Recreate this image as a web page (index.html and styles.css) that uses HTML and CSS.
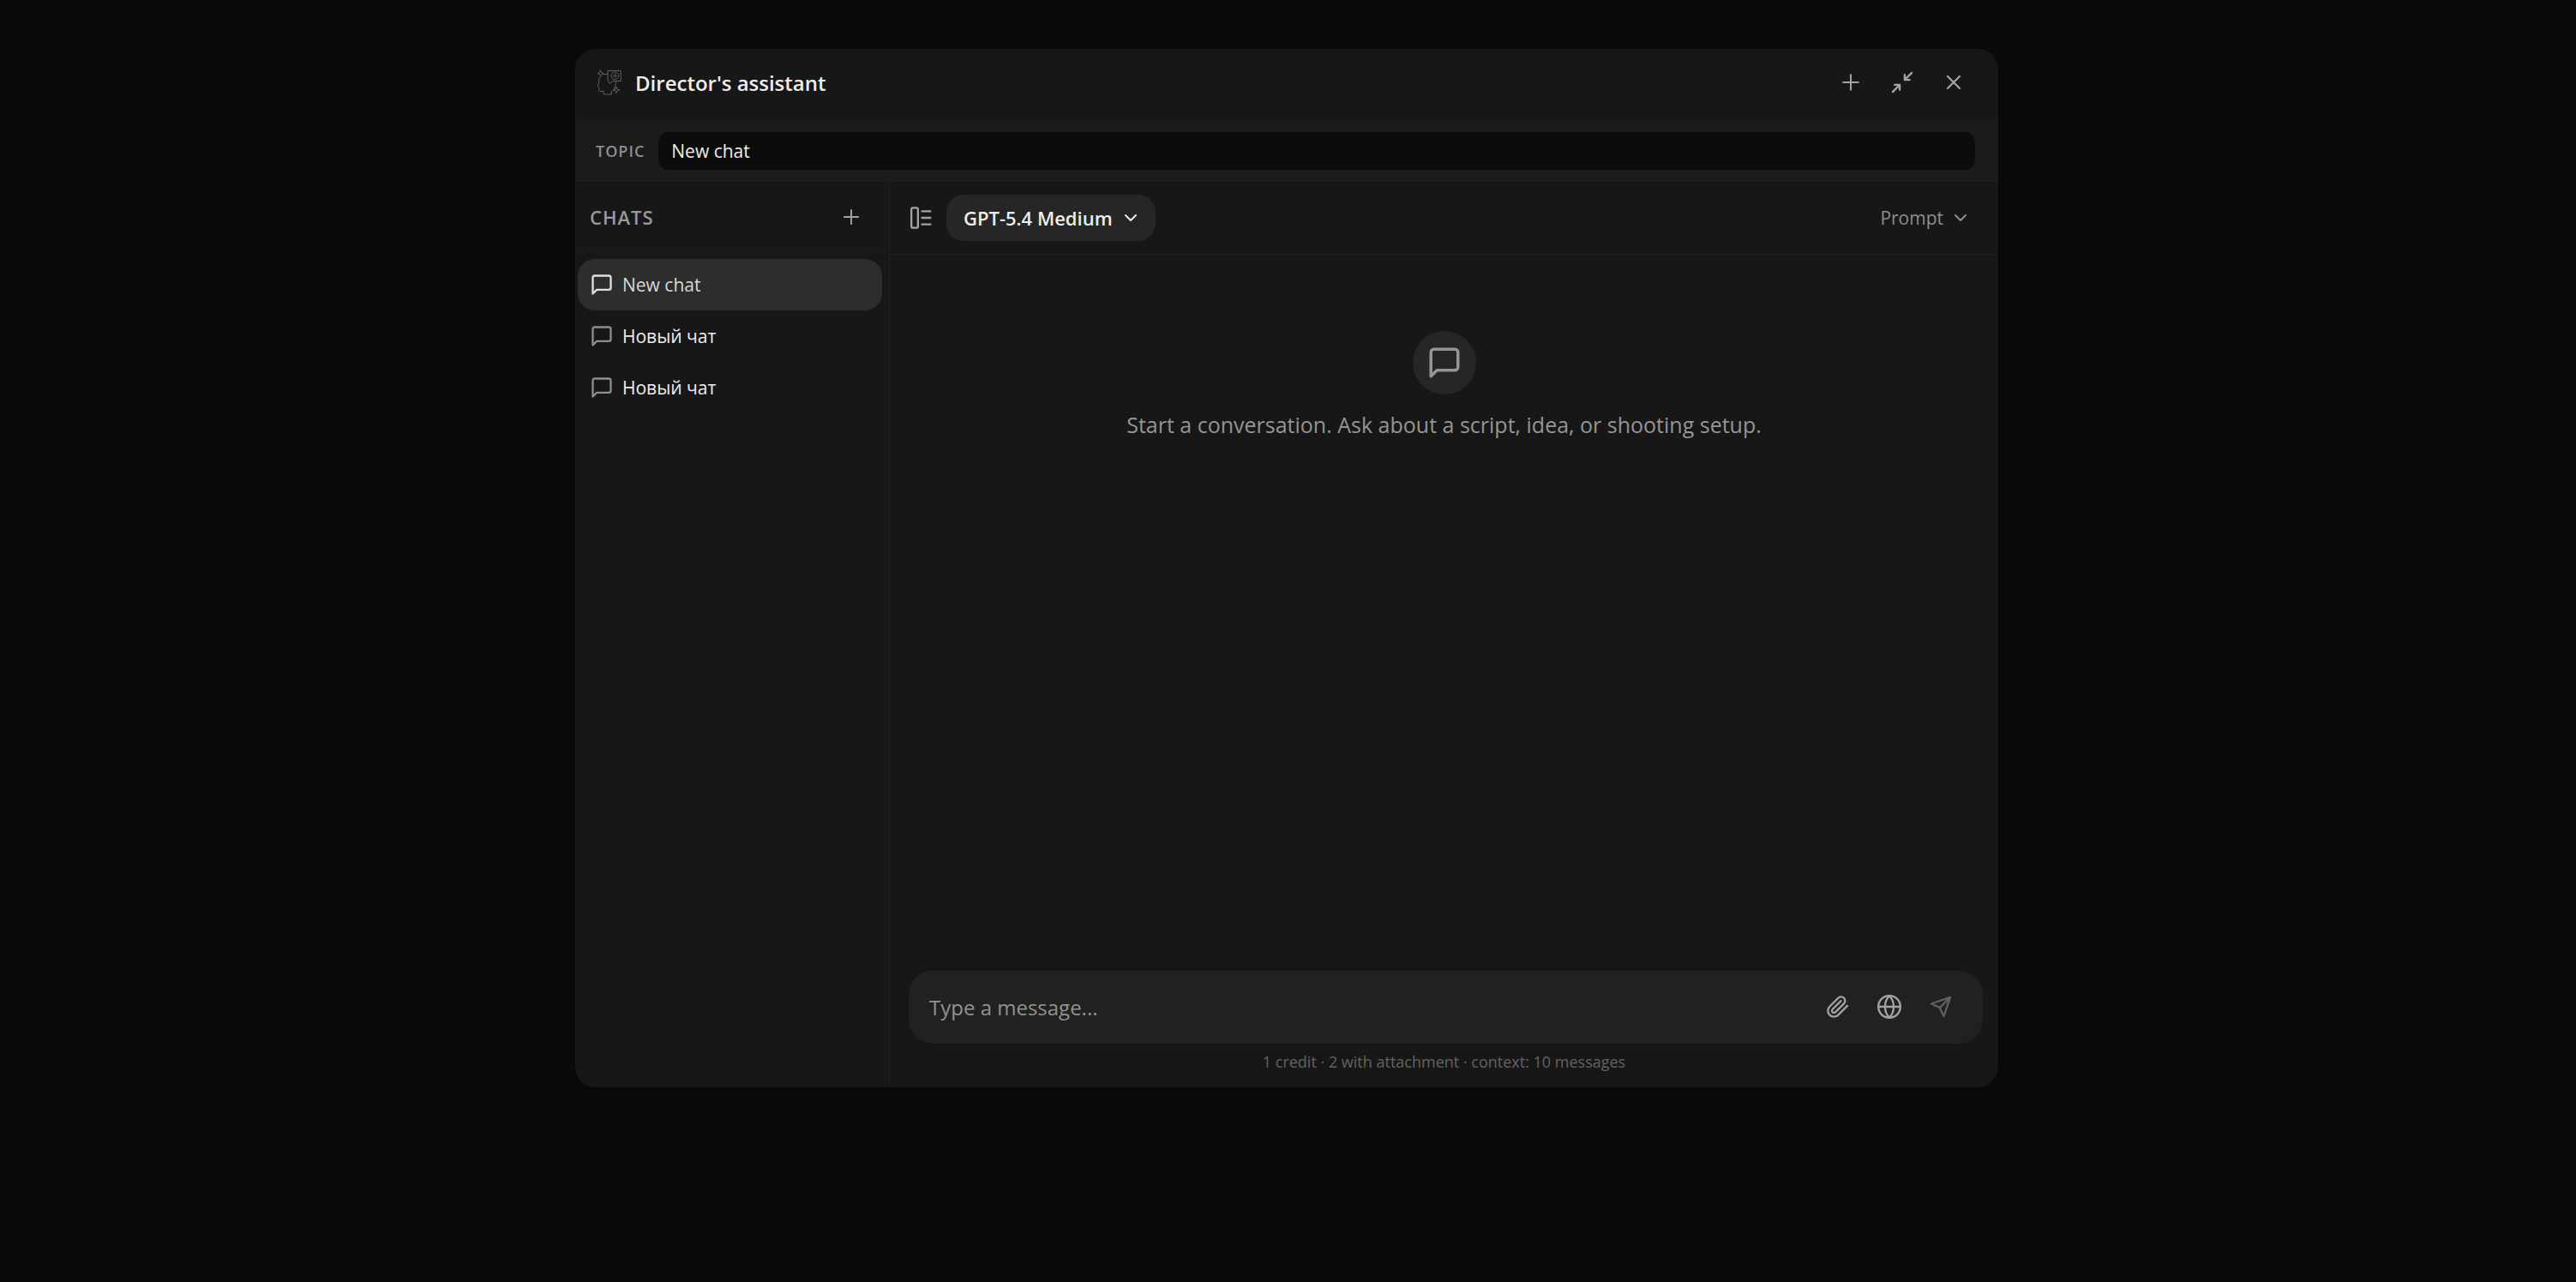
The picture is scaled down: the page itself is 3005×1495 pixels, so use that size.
FILE: index.html
```html
<!DOCTYPE html>
<html lang="en">
<head>
    <meta charset="UTF-8">
    <meta name="viewport" content="width=device-width, initial-scale=1.0">
    <title>Director's assistant</title>
    <link rel="stylesheet" href="styles.css">
</head>
<body>
    <!-- shared icon shapes -->
    <svg class="sprite" aria-hidden="true">
        <symbol id="i-plus" viewBox="0 0 24 24"><path d="M4.500 12h15M12 4.500v15"/></symbol>
        <symbol id="i-close" viewBox="0 0 24 24"><path d="M18 6 6 18M6 6l12 12"/></symbol>
        <symbol id="i-minimize" viewBox="0 0 24 24"><path d="M4.500 14.500h5v5M19.500 9.500h-5v-5M14.500 9.500 21.500 2.500M2.500 21.500l7-7"/></symbol>
        <symbol id="i-chat" viewBox="0 0 24 24"><path d="M21 15a2 2 0 0 1-2 2H7l-4 4V5a2 2 0 0 1 2-2h14a2 2 0 0 1 2 2z"/></symbol>
        <symbol id="i-down" viewBox="0 0 24 24"><path d="m6 9 6 6 6-6"/></symbol>
        <symbol id="i-panel" viewBox="0 0 24 24"><rect x="2.700" y="2" width="6.600" height="20" rx="1.500"/><path stroke-linecap="butt" d="M12.500 5.500h10M12.500 12h10M12.500 18.500h10"/></symbol>
        <symbol id="i-clip" viewBox="0 0 24 24"><path d="m21.440 11.050-9.190 9.190a6 6 0 0 1-8.490-8.490l8.570-8.570A4 4 0 1 1 18 8.840l-8.590 8.570a2 2 0 0 1-2.830-2.830l8.490-8.480"/></symbol>
        <symbol id="i-globe" viewBox="0 0 24 24"><circle cx="12" cy="12" r="11"/><path d="M1 12h22M12 1c3 3.200 4.300 7 4.300 11s-1.300 7.800-4.300 11c-3-3.200-4.300-7-4.300-11S9 4.200 12 1z"/></symbol>
        <symbol id="i-send" viewBox="0 0 24 24"><path d="M21.500 2.500 15 21.500l-4-8.500-8.500-4zM21.500 2.500 11 13"/></symbol>
        <symbol id="i-logo" viewBox="0 0 30 30">
            <path d="M8 5.500h6M5 9C3.500 11 3.500 13 3.800 15l-1.500 4c0 1 1.500 1 1.500 2v3c0 1 1 1.500 2 1.500h3.500v3.500h9v-3.500c3-2 5-5.500 5-11M14.200 1.500h15v12H20l-4 3-1.800-4z"/>
            <path d="m5.500 1 1 2.500 2.500 1-2.500 1-1 2.500-1-2.500-2.500-1 2.500-1zM24 20.500l1 2.500 2.500 1-2.500 1-1 2.500-1-2.500-2.500-1 2.500-1z"/>
            <circle cx="22.300" cy="7.300" r="4.300"/><circle cx="22.300" cy="7.300" r="1.500"/>
        </symbol>
    </svg>

    <main class="modal">
        <header class="modal-header">
            <svg class="logo"><use href="#i-logo"/></svg>
            <h1>Director's assistant</h1>
            <div class="header-actions">
                <button class="icon-btn" aria-label="New chat"><svg class="icon thin"><use href="#i-plus"/></svg></button>
                <button class="icon-btn" aria-label="Collapse"><svg class="icon"><use href="#i-minimize"/></svg></button>
                <button class="icon-btn" aria-label="Close"><svg class="icon"><use href="#i-close"/></svg></button>
            </div>
        </header>

        <div class="topic">
            <label for="topic">TOPIC</label>
            <input id="topic" type="text" value="New chat">
        </div>

        <div class="content">
            <aside class="sidebar">
                <div class="sidebar-header">
                    <h2>CHATS</h2>
                    <button class="icon-btn" aria-label="Add chat"><svg class="icon small thin"><use href="#i-plus"/></svg></button>
                </div>
                <nav class="chat-list">
                    <button class="chat active"><svg class="icon"><use href="#i-chat"/></svg>New chat</button>
                    <button class="chat"><svg class="icon"><use href="#i-chat"/></svg>Новый чат</button>
                    <button class="chat"><svg class="icon"><use href="#i-chat"/></svg>Новый чат</button>
                </nav>
            </aside>

            <section class="main">
                <div class="toolbar">
                    <button class="panel-btn" aria-label="Toggle sidebar"><svg class="icon"><use href="#i-panel"/></svg></button>
                    <button class="model-btn">GPT-5.4 Medium<svg class="chevron"><use href="#i-down"/></svg></button>
                    <button class="prompt-btn">Prompt<svg class="chevron"><use href="#i-down"/></svg></button>
                </div>

                <div class="empty">
                    <div class="empty-icon"><svg><use href="#i-chat"/></svg></div>
                    <p>Start a conversation. Ask about a script, idea, or shooting setup.</p>
                </div>

                <form class="composer">
                    <input type="text" placeholder="Type a message..." aria-label="Message">
                    <button type="button" class="icon-btn" aria-label="Attach file"><svg class="icon"><use href="#i-clip"/></svg></button>
                    <button type="button" class="icon-btn" aria-label="Web search"><svg class="icon"><use href="#i-globe"/></svg></button>
                    <button type="submit" class="icon-btn" aria-label="Send" disabled><svg class="icon"><use href="#i-send"/></svg></button>
                </form>
                <p class="hint">1 credit · 2 with attachment · context: 10 messages</p>
            </section>
        </div>
    </main>
</body>
</html>
```

FILE: styles.css
```css
* {
    margin: 0;
    padding: 0;
    box-sizing: border-box;
}

body {
    min-height: 100vh;
    padding: 57px 27px 57px 24px;
    background-color: #090909;
    color: #ededed;
    font-family: "Open Sans", "Noto Sans", sans-serif;
    font-size: 21px;
}

button,
input {
    border: none;
    outline: none;
    background: none;
    color: inherit;
    font: inherit;
}

button {
    cursor: pointer;
}

svg {
    flex-shrink: 0;
    fill: none;
    stroke: currentColor;
    stroke-width: 2;
    stroke-linecap: round;
    stroke-linejoin: round;
}

.sprite {
    display: none;
}

.modal {
    display: flex;
    flex-direction: column;
    width: 100%;
    max-width: 1660px;
    height: 81vh;
    margin: 0 auto;
    background-color: #171717;
    border-radius: 24px;
    overflow: hidden;
}

/* Header */
.modal-header {
    display: flex;
    align-items: center;
    height: 84px;
    padding: 0 22px 6px 24px;
    border-bottom: 1px solid #1e1e1e;
}

.logo {
    width: 30px;
    height: 30px;
    margin-right: 16px;
    color: #606060;
    stroke-width: 1;
}

h1 {
    padding-top: 2px;
    font-size: 24px;
    font-weight: 600;
}

.header-actions {
    display: flex;
    margin-left: auto;
}

.icon-btn {
    display: flex;
    align-items: center;
    justify-content: center;
    width: 60px;
    height: 60px;
    color: #a3a3a3;
}

.icon {
    width: 28px;
    height: 28px;
}

.icon.small {
    width: 26px;
    height: 26px;
}

.icon.thin {
    stroke-width: 1.8;
}

/* Topic */
.topic {
    display: flex;
    align-items: center;
    gap: 16px;
    height: 71px;
    padding: 0 27px 0 24px;
    background-color: #1b1b1b;
    border-bottom: 1px solid #1f1f1f;
}

.topic label {
    color: #8e8e8e;
    font-size: 18px;
    font-weight: 600;
    letter-spacing: 1px;
}

.topic input {
    flex: 1;
    height: 44px;
    padding: 0 15px;
    background-color: #0c0c0c;
    border-radius: 12px;
}

/* Sidebar */
.content {
    display: flex;
    flex: 1;
    min-height: 0;
}

.sidebar {
    width: 367px;
    border-right: 1px solid #1e1e1e;
}

.sidebar-header {
    display: flex;
    align-items: center;
    justify-content: space-between;
    height: 83px;
    padding: 0 14px 0 17px;
    border-bottom: 1px solid #1c1c1c;
}

h2 {
    color: #9a9a9a;
    font-size: 22px;
    font-weight: 600;
    letter-spacing: 1px;
}

.chat-list {
    padding: 7px 8px 0 3px;
}

.chat {
    display: flex;
    align-items: center;
    gap: 10px;
    width: 100%;
    height: 60px;
    padding: 0 14px;
    border-radius: 20px;
    text-align: left;
}

.chat .icon {
    color: #8e8e8e;
}

.chat.active {
    background-color: #2d2d2d;
    color: #d8d8d8;
}

.chat.active .icon {
    color: #e0e0e0;
}

/* Conversation */
.main {
    display: flex;
    flex: 1;
    flex-direction: column;
    min-width: 0;
}

.toolbar {
    display: flex;
    align-items: center;
    height: 85px;
    padding: 0 32px 0 22px;
    border-bottom: 1px solid #1e1e1e;
}

.panel-btn,
.model-btn,
.prompt-btn {
    display: flex;
    align-items: center;
}

.panel-btn {
    margin-right: 16px;
    color: #a3a3a3;
}

.model-btn {
    gap: 9px;
    height: 54px;
    padding: 0 17px 0 20px;
    background-color: #262626;
    border-radius: 20px;
    font-size: 22px;
    font-weight: 600;
}

.prompt-btn {
    gap: 8px;
    margin-left: auto;
    color: #8e8e8e;
}

.chevron {
    width: 24px;
    height: 24px;
}

.empty {
    display: flex;
    flex: 1;
    flex-direction: column;
    align-items: center;
    gap: 18px;
    padding-top: 89px;
    color: #959595;
    font-size: 25px;
}

.empty-icon {
    display: flex;
    align-items: center;
    justify-content: center;
    width: 74px;
    height: 74px;
    background-color: #262626;
    border-radius: 50%;
}

.empty-icon svg {
    width: 42px;
    height: 42px;
}

.composer {
    display: flex;
    align-items: center;
    height: 85px;
    margin: 0 18px 0 22px;
    padding: 0 19px 0 24px;
    background-color: #212121;
    border-radius: 28px;
}

.composer input {
    flex: 1;
    min-width: 0;
    font-size: 24px;
}

.composer input::placeholder {
    color: #929292;
    opacity: 1;
}

.composer .icon-btn:disabled {
    color: #606060;
}

.hint {
    padding: 8px 0 17px;
    color: #636363;
    font-size: 18px;
    line-height: 26px;
    text-align: center;
}
```
